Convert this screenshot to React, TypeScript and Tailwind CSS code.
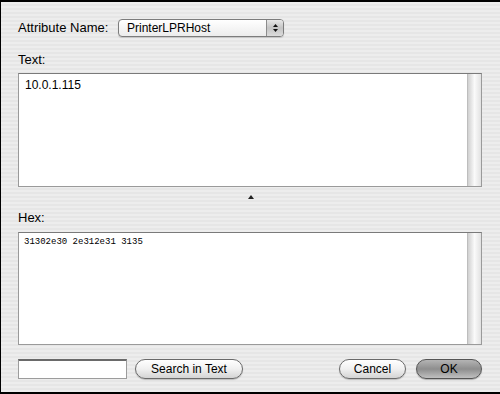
export default function App() {
    const font = { fontFamily: '"Liberation Sans", Arial, sans-serif' };
    return (
        <div
            className="w-[500px] h-[394px] box-border border-t-2 border-l border-b-2 border-black bg-[repeating-linear-gradient(0deg,#ededed_0px,#ededed_2px,#e6e6e6_2px,#e6e6e6_4px)] text-black overflow-hidden"
            style={font}
        >
            <div className="pl-[17px] pr-[18px]">
                {/* Attribute name row */}
                <div className="flex items-center h-[18px] mt-[17px]">
                    <span className="text-[13px] w-[100px]">Attribute Name:</span>
                    <div className="flex items-stretch w-[166px] h-[18px] rounded-[4px] border border-[#7c7c7c] overflow-hidden bg-gradient-to-b from-white to-[#ececec] shadow-[0_1px_1px_rgba(0,0,0,0.15)]">
                        <span className="flex-1 pl-[8px] text-[12px] leading-[16px]">PrinterLPRHost</span>
                        <div className="w-[17px] border-l border-[#8c8c8c] bg-gradient-to-b from-[#e8e8e8] via-[#c4c4c4] to-[#dcdcdc] flex flex-col items-center justify-center gap-[2px]">
                            <svg width="5" height="3" viewBox="0 0 5 3"><path d="M2.5 0L5 3H0z" fill="#111" /></svg>
                            <svg width="5" height="3" viewBox="0 0 5 3"><path d="M0 0h5L2.5 3z" fill="#111" /></svg>
                        </div>
                    </div>
                </div>

                {/* Text */}
                <div className="text-[13px] mt-[15px] leading-[16px]">Text:</div>
                <div className="mt-[5px] h-[114px] flex border border-[#9a9a9a] border-t-[#7a7a7a] bg-white">
                    <div className="flex-1 pl-[6px] pt-[4px] text-[12px] leading-[14px]">10.0.1.115</div>
                    <div className="w-[14px] border-l border-[#bdbdbd] bg-gradient-to-r from-[#d0d0d0] via-[#fafafa] to-[#e2e2e2]" />
                </div>

                {/* splitter */}
                <div className="flex justify-center h-[20px] items-center pl-[2px]">
                    <svg width="6" height="4" viewBox="0 0 6 4"><path d="M3 0L6 4H0z" fill="#222" /></svg>
                </div>

                {/* Hex */}
                <div className="text-[13px] leading-[16px] mt-[3px]">Hex:</div>
                <div className="mt-[6px] h-[113px] flex border border-[#9a9a9a] border-t-[#7a7a7a] bg-white">
                    <div
                        className="flex-1 pl-[5px] pt-[3px] text-[9px] leading-[12px] whitespace-pre"
                        style={{ fontFamily: '"Liberation Mono", "Courier New", monospace' }}
                    >
                        31302e30 2e312e31 3135
                    </div>
                    <div className="w-[14px] border-l border-[#bdbdbd] bg-gradient-to-r from-[#d0d0d0] via-[#fafafa] to-[#e2e2e2]" />
                </div>

                {/* bottom row */}
                <div className="flex items-center mt-[14px] h-[20px]">
                    <div className="w-[109px] h-[20px] bg-white border border-[#9c9c9c] border-t-[#6a6a6a] border-t-2" />
                    <button className="ml-[8px] w-[108px] h-[20px] rounded-full border border-[#6a6a6a] bg-gradient-to-b from-white via-[#f0f0f0] to-[#d4d4d4] text-[12px] leading-[18px] shadow-[0_1px_1px_rgba(0,0,0,0.2)]">
                        Search in Text
                    </button>
                    <div className="flex-1" />
                    <button className="w-[67px] h-[20px] rounded-full border border-[#6a6a6a] bg-gradient-to-b from-white via-[#f0f0f0] to-[#d4d4d4] text-[12px] leading-[18px] shadow-[0_1px_1px_rgba(0,0,0,0.2)]">
                        Cancel
                    </button>
                    <button className="ml-[10px] w-[66px] h-[20px] rounded-full border border-[#555] bg-gradient-to-b from-[#b4b4b4] via-[#8e8e8e] to-[#c0c0c0] text-[12px] leading-[18px] shadow-[0_1px_1px_rgba(0,0,0,0.25)]">
                        OK
                    </button>
                </div>
            </div>
        </div>
    );
}
